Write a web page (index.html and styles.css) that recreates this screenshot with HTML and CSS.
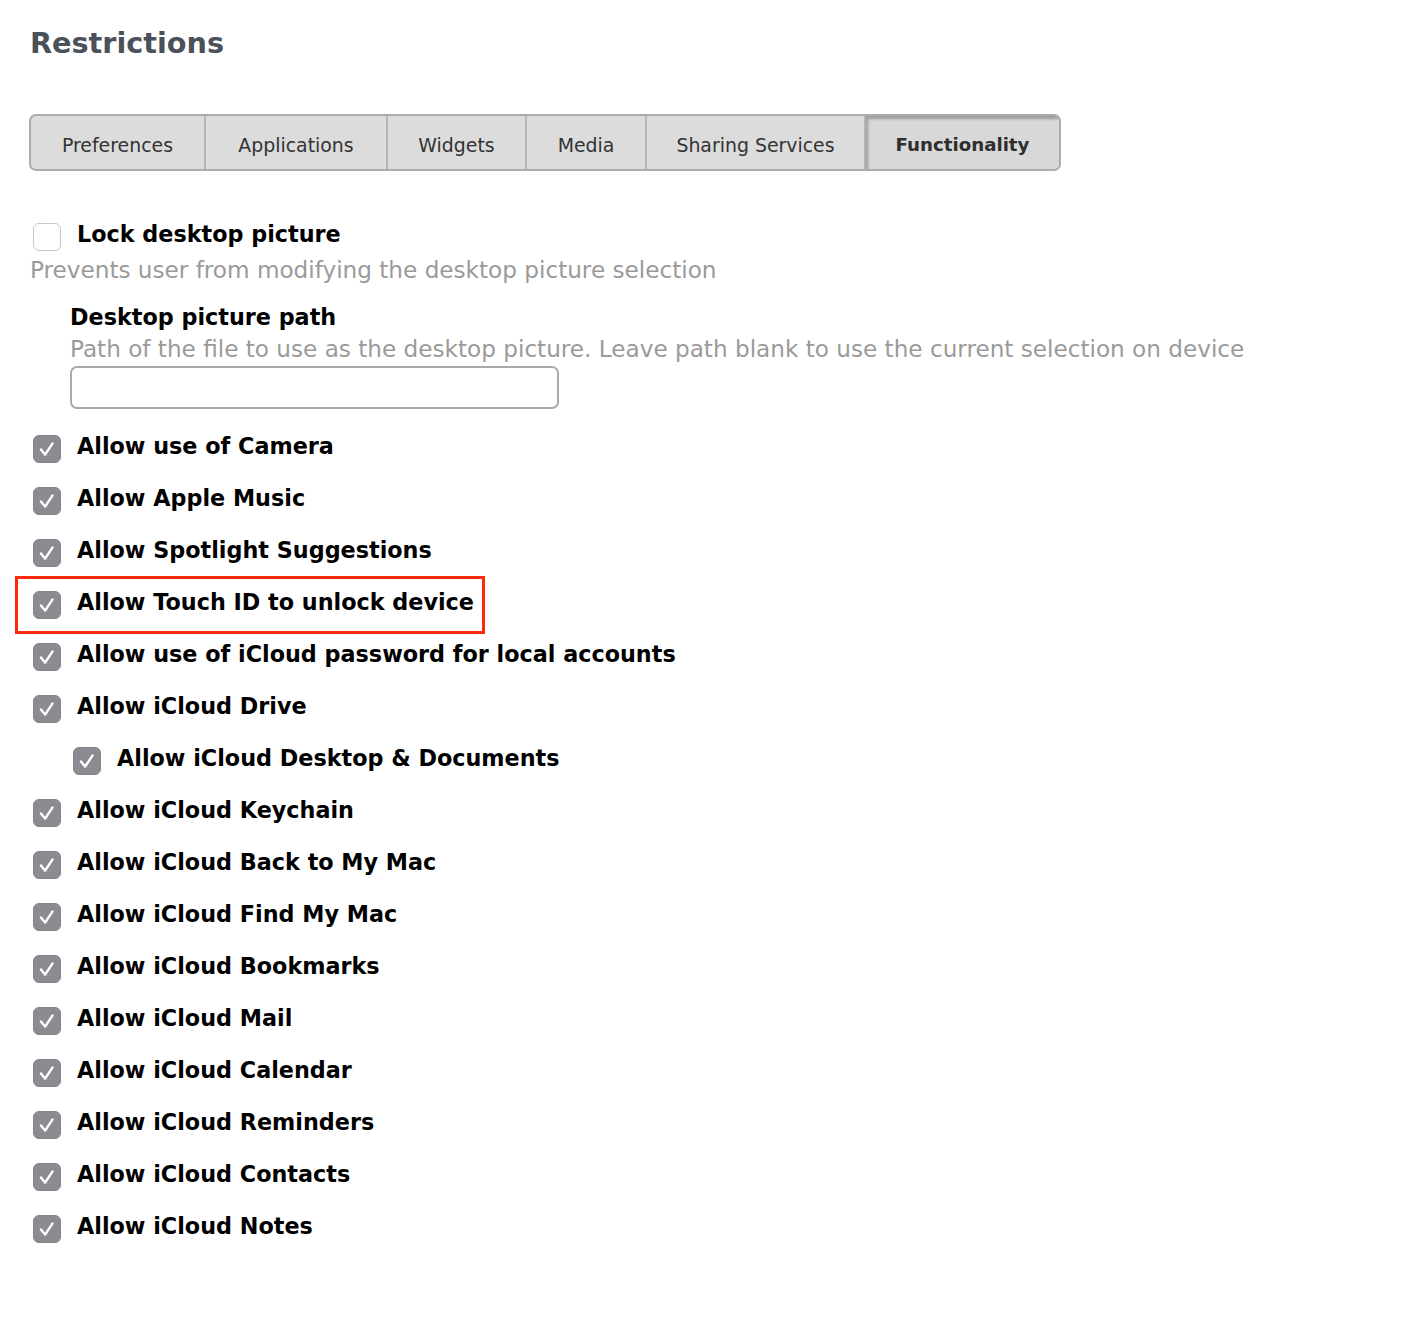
FILE: index.html
```html
<!DOCTYPE html>
<html lang="en">
<head>
<meta charset="utf-8">
<title>Restrictions</title>
<link rel="stylesheet" href="styles.css">
</head>
<body>
<main class="page">
  <h1 class="title">Restrictions</h1>

  <nav class="tabs">
    <div class="tab tab-prefs">Preferences</div>
    <div class="tab tab-apps">Applications</div>
    <div class="tab tab-widgets">Widgets</div>
    <div class="tab tab-media">Media</div>
    <div class="tab tab-sharing">Sharing Services</div>
    <div class="tab tab-func active">Functionality</div>
  </nav>

  <section class="settings">
    <div class="row lock">
      <span class="box"></span>
      <span class="label">Lock desktop picture</span>
    </div>
    <p class="desc">Prevents user from modifying the desktop picture selection</p>

    <div class="path-field">
      <div class="field-label">Desktop picture path</div>
      <p class="desc">Path of the file to use as the desktop picture. Leave path blank to use the current selection on device</p>
      <div class="input"></div>
    </div>

    <div class="list">
      <div class="row"><span class="box checked"><svg viewBox="0 0 28 28"><path d="M7.5 14.5 L12 20 L20 8"/></svg></span><span class="label">Allow use of Camera</span></div>
      <div class="row"><span class="box checked"><svg viewBox="0 0 28 28"><path d="M7.5 14.5 L12 20 L20 8"/></svg></span><span class="label">Allow Apple Music</span></div>
      <div class="row"><span class="box checked"><svg viewBox="0 0 28 28"><path d="M7.5 14.5 L12 20 L20 8"/></svg></span><span class="label">Allow Spotlight Suggestions</span></div>
      <div class="row highlight"><span class="box checked"><svg viewBox="0 0 28 28"><path d="M7.5 14.5 L12 20 L20 8"/></svg></span><span class="label">Allow Touch ID to unlock device</span></div>
      <div class="row"><span class="box checked"><svg viewBox="0 0 28 28"><path d="M7.5 14.5 L12 20 L20 8"/></svg></span><span class="label">Allow use of iCloud password for local accounts</span></div>
      <div class="row"><span class="box checked"><svg viewBox="0 0 28 28"><path d="M7.5 14.5 L12 20 L20 8"/></svg></span><span class="label">Allow iCloud Drive</span></div>
      <div class="row nested"><span class="box checked"><svg viewBox="0 0 28 28"><path d="M7.5 14.5 L12 20 L20 8"/></svg></span><span class="label">Allow iCloud Desktop &amp; Documents</span></div>
      <div class="row"><span class="box checked"><svg viewBox="0 0 28 28"><path d="M7.5 14.5 L12 20 L20 8"/></svg></span><span class="label">Allow iCloud Keychain</span></div>
      <div class="row"><span class="box checked"><svg viewBox="0 0 28 28"><path d="M7.5 14.5 L12 20 L20 8"/></svg></span><span class="label">Allow iCloud Back to My Mac</span></div>
      <div class="row"><span class="box checked"><svg viewBox="0 0 28 28"><path d="M7.5 14.5 L12 20 L20 8"/></svg></span><span class="label">Allow iCloud Find My Mac</span></div>
      <div class="row"><span class="box checked"><svg viewBox="0 0 28 28"><path d="M7.5 14.5 L12 20 L20 8"/></svg></span><span class="label">Allow iCloud Bookmarks</span></div>
      <div class="row"><span class="box checked"><svg viewBox="0 0 28 28"><path d="M7.5 14.5 L12 20 L20 8"/></svg></span><span class="label">Allow iCloud Mail</span></div>
      <div class="row"><span class="box checked"><svg viewBox="0 0 28 28"><path d="M7.5 14.5 L12 20 L20 8"/></svg></span><span class="label">Allow iCloud Calendar</span></div>
      <div class="row"><span class="box checked"><svg viewBox="0 0 28 28"><path d="M7.5 14.5 L12 20 L20 8"/></svg></span><span class="label">Allow iCloud Reminders</span></div>
      <div class="row"><span class="box checked"><svg viewBox="0 0 28 28"><path d="M7.5 14.5 L12 20 L20 8"/></svg></span><span class="label">Allow iCloud Contacts</span></div>
      <div class="row"><span class="box checked"><svg viewBox="0 0 28 28"><path d="M7.5 14.5 L12 20 L20 8"/></svg></span><span class="label">Allow iCloud Notes</span></div>
    </div>
  </section>
</main>
</body>
</html>
```

FILE: styles.css
```css
html, body {
  margin: 0;
  padding: 0;
  background: #ffffff;
}

body {
  font-family: "DejaVu Sans", "Liberation Sans", sans-serif;
  color: #000;
}

.page {
  padding: 22px 30px 60px 30px;
}

.title {
  margin: 0;
  font-size: 28.7px;
  line-height: 42px;
  font-weight: bold;
  color: #4a5159;
}

.tabs {
  display: inline-flex;
  margin: 50px 0 0 -1px;
  border: 2px solid #acacac;
  border-radius: 7px;
  background: #dcdcdc;
  overflow: hidden;
}

.tab {
  box-sizing: border-box;
  height: 53px;
  padding-top: 5px;
  line-height: 48px;
  text-align: center;
  font-size: 18.9px;
  color: #333;
  border-left: 2px solid #b5b5b5;
}

.tab:first-child {
  border-left: none;
}

.tab-prefs { width: 173px; }
.tab-apps { width: 182px; }
.tab-widgets { width: 139px; }
.tab-media { width: 120px; }
.tab-sharing { width: 219px; }
.tab-func { width: 195px; }

.tab.active {
  font-weight: bold;
  font-size: 18.2px;
  color: #2e2e2e;
  background: #d8d8d8;
  box-shadow: inset 2px 3px 3px rgba(0, 0, 0, 0.28);
}

.settings {
  margin-top: 43px;
}

.row {
  display: flex;
  align-items: center;
  height: 52px;
  position: relative;
}

.row.lock {
  height: 40px;
}

.box {
  flex: none;
  width: 28px;
  height: 28px;
  box-sizing: border-box;
  margin: 6px 16px 0 3px;
  border-radius: 6px;
  border: 1px solid #c8c8c8;
  background: #fff;
  display: flex;
}

.box.checked {
  background: #8c8b91;
  border-color: #858489;
}

.box svg {
  width: 26px;
  height: 26px;
}

.box path {
  fill: none;
  stroke: #fff;
  stroke-width: 2.6;
  stroke-linecap: round;
  stroke-linejoin: round;
}

.label {
  font-size: 22.3px;
  font-weight: bold;
  line-height: 40px;
  white-space: nowrap;
}

.desc {
  margin: 0;
  font-size: 23.15px;
  line-height: 32px;
  color: #9a9a9a;
  white-space: nowrap;
}

.path-field {
  margin: 15px 0 0 40px;
}

.field-label {
  font-size: 22.3px;
  font-weight: bold;
  line-height: 32px;
}

.input {
  margin-top: 1px;
  width: 489px;
  height: 43px;
  box-sizing: border-box;
  border: 2px solid #a9a9a9;
  border-radius: 7px;
  background: #fff;
}

.list {
  margin-top: 11px;
}

.row.nested {
  padding-left: 40px;
}

.row.highlight::after {
  content: "";
  position: absolute;
  left: -15px;
  top: 0;
  width: 470px;
  height: 58px;
  box-sizing: border-box;
  border: 3px solid #ff2a0c;
  pointer-events: none;
}
```
